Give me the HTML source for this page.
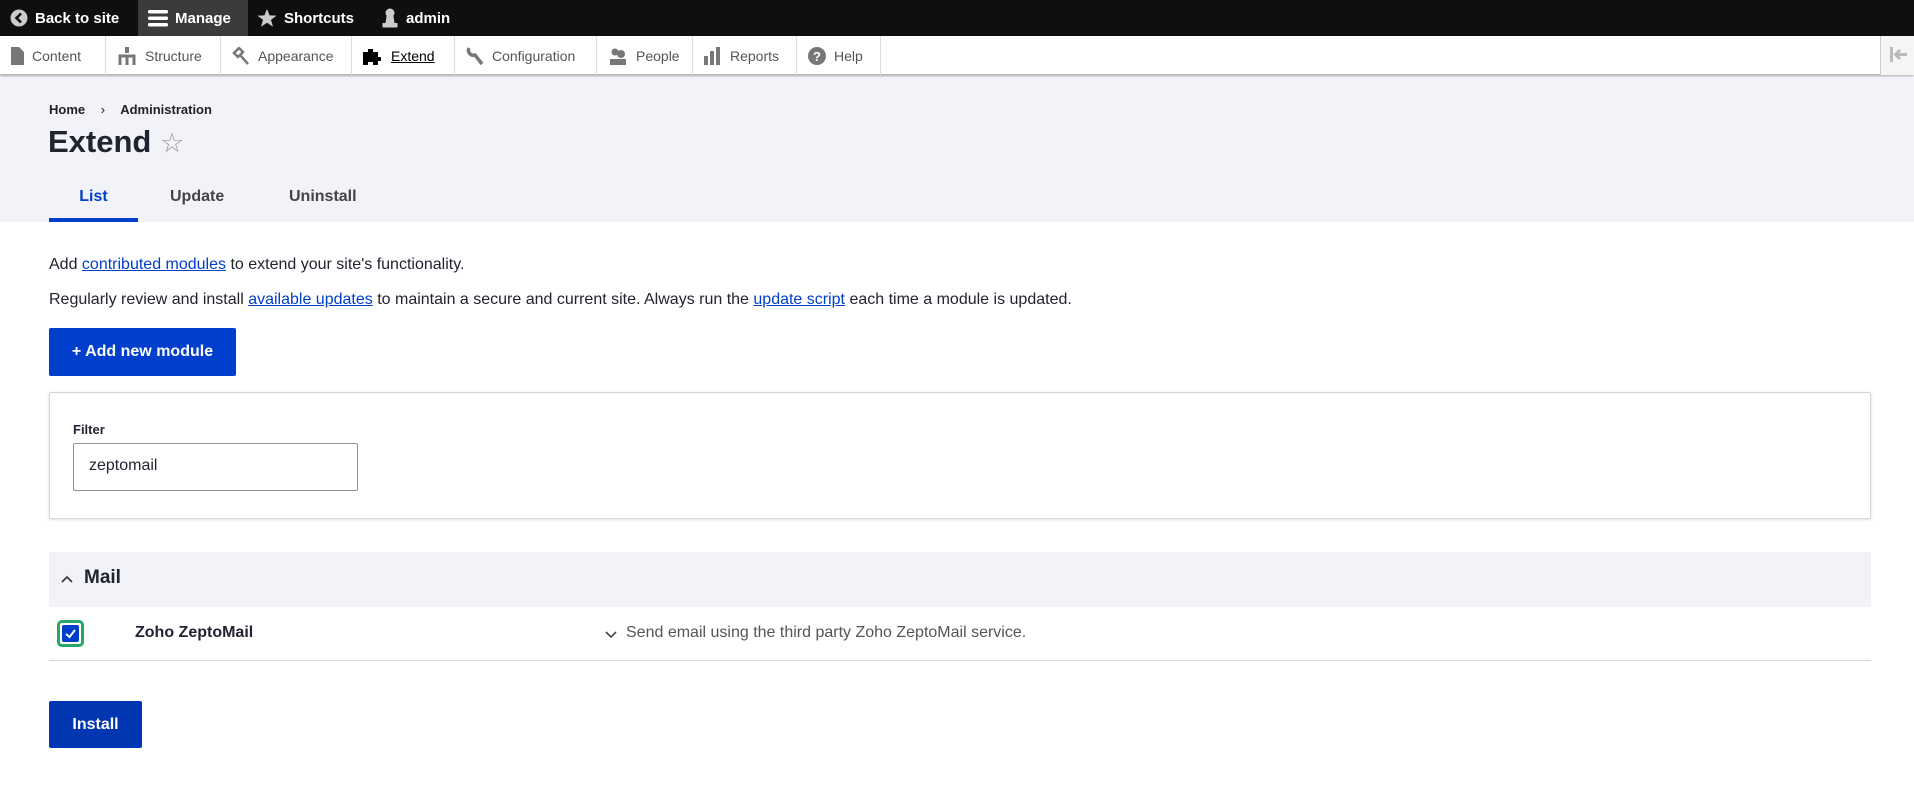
<!DOCTYPE html>
<html><head><meta charset="utf-8"><style>
*{box-sizing:border-box;margin:0;padding:0}
body{width:1914px;height:802px;overflow:hidden;background:#fff;font-family:"Liberation Sans",sans-serif;color:#222330;position:relative}
.top{position:absolute;left:0;top:0;width:1914px;height:36px;background:#0f0f0f;color:#fff;font-weight:bold;font-size:15px}
.top .it{position:absolute;top:0;height:36px;display:flex;align-items:center;gap:7px}
.nav{position:absolute;left:0;top:36px;width:1914px;height:39px;background:#fff;border-bottom:1px solid #bbb;box-shadow:0 2px 2px rgba(0,0,0,.25);font-size:14px;color:#555}
.nav .it{position:absolute;top:0;height:39px;display:flex;align-items:center;gap:8px;padding-left:11px;border-right:1px solid #ddd}
.hdr{position:absolute;left:0;top:77px;width:1914px;height:145px;background:#f2f3f8}
a{color:#003ecc}
.btn{position:absolute;background:#003ecc;color:#fff;font-weight:bold;font-size:16px;display:flex;align-items:center;justify-content:center;border-radius:2px}
</style></head><body>
<div class="top">
 <div class="it" style="left:10px"><svg width="18" height="18"><circle cx="9" cy="9" r="8.5" fill="#ccc"/><path d="M11 4.5 L6.5 9 L11 13.5" stroke="#111" stroke-width="2.6" fill="none"/></svg>Back to site</div>
 <div class="it" style="left:138px;width:110px;background:#3b3b3b;padding-left:10px"><svg width="20" height="18"><rect y="1" width="20" height="3.5" rx="1.5" fill="#fff"/><rect y="7.5" width="20" height="3.5" rx="1.5" fill="#fff"/><rect y="14" width="20" height="3.5" rx="1.5" fill="#fff"/></svg>Manage</div>
 <div class="it" style="left:257px"><svg width="20" height="20"><path d="M10 1 L12.6 7.4 L19.5 7.6 L14 11.9 L16 18.8 L10 14.8 L4 18.8 L6 11.9 L0.5 7.6 L7.4 7.4Z" fill="#ccc"/></svg>Shortcuts</div>
 <div class="it" style="left:381px"><svg width="18" height="20"><circle cx="9" cy="5" r="4.5" fill="#ccc"/><path d="M5.5 8 h7 l1 7 h3 v4.5 h-15 v-4.5 h3z" fill="#ccc"/></svg>admin</div>
</div>
<div class="nav">
 <div class="it" style="left:0;width:106px"><svg width="13" height="18"><path d="M0 0h8l5 5v13H0z" fill="#777"/></svg>Content</div>
 <div class="it" style="left:106px;width:115px"><svg width="20" height="18"><rect x="8" y="0" width="4" height="6" fill="#777"/><path d="M3 18V9h14v9" stroke="#777" stroke-width="3" fill="none"/><rect x="8.5" y="8" width="3" height="10" fill="#777"/></svg>Structure</div>
 <div class="it" style="left:221px;width:131px"><svg width="18" height="18"><path d="M2 6 L7 1 L11 5 L6 10Z M8 8 L16 17" stroke="#777" stroke-width="2.5" fill="none"/></svg>Appearance</div>
 <div class="it" style="left:352px;width:103px;color:#000;text-decoration:underline"><svg width="20" height="18"><path d="M0 5h5v-3h5v3h5v5h3v4h-3v4h-5v-3h-5v3H0z" fill="#000"/></svg>Extend</div>
 <div class="it" style="left:455px;width:142px"><svg width="18" height="20"><path d="M3 2 A5 5 0 0 0 9 9 L16 18" stroke="#777" stroke-width="3.5" fill="none"/></svg>Configuration</div>
 <div class="it" style="left:597px;width:96px"><svg width="20" height="18"><circle cx="7" cy="5" r="3.5" fill="#777"/><circle cx="13" cy="7" r="4" fill="#777"/><path d="M2 18v-6h16v6z" fill="#777"/></svg>People</div>
 <div class="it" style="left:693px;width:104px"><svg width="18" height="18"><rect x="0" y="9" width="4" height="9" fill="#777"/><rect x="6" y="4" width="4" height="14" fill="#777"/><rect x="12" y="0" width="4" height="18" fill="#777"/></svg>Reports</div>
 <div class="it" style="left:797px;width:84px"><svg width="18" height="18"><circle cx="9" cy="9" r="9" fill="#777"/><text x="9" y="14" font-size="13" font-weight="bold" fill="#fff" text-anchor="middle" font-family="Liberation Sans">?</text></svg>Help</div>
 <div style="position:absolute;left:1880px;top:0;width:34px;height:39px;background:#f5f5f5;border-left:1px solid #ccc"><svg width="30" height="39"><rect x="9" y="11" width="3" height="15" fill="#bbb"/><path d="M15 18.5h11M19 14l-4.5 4.5 4.5 4.5" stroke="#bbb" stroke-width="3" fill="none"/></svg></div>
</div>
<div class="hdr">
 <div style="position:absolute;left:49px;top:25px;font-size:13px;font-weight:bold;color:#222">Home <span style="margin:0 12px;font-weight:normal">›</span> Administration</div>
 <div style="position:absolute;left:48px;top:47px;font-size:31px;font-weight:bold;color:#222330">Extend <span style="font-weight:normal;color:#999;font-size:27px">☆</span></div>
 <div style="position:absolute;left:49px;top:111px;width:89px;text-align:center;font-weight:bold;font-size:16px;color:#003ecc">List</div>
 <div style="position:absolute;left:49px;top:141px;width:89px;height:4px;background:#003ecc"></div>
 <div style="position:absolute;left:170px;top:111px;font-weight:bold;font-size:16px;color:#444">Update</div>
 <div style="position:absolute;left:289px;top:111px;font-weight:bold;font-size:16px;color:#444">Uninstall</div>
</div>
<div style="position:absolute;left:49px;top:256px;font-size:16px">Add <a href="#">contributed modules</a> to extend your site's functionality.</div>
<div style="position:absolute;left:49px;top:291px;font-size:16px">Regularly review and install <a href="#">available updates</a> to maintain a secure and current site. Always run the <a href="#">update script</a> each time a module is updated.</div>
<div class="btn" style="left:49px;top:328px;width:187px;height:48px">+ Add new module</div>
<div style="position:absolute;left:49px;top:392px;width:1822px;height:127px;border:1px solid #d4d4d8;box-shadow:0 1px 3px rgba(0,0,0,.12);border-radius:2px"></div>
<div style="position:absolute;left:73px;top:422px;font-size:13px;font-weight:bold">Filter</div>
<div style="position:absolute;left:73px;top:443px;width:285px;height:48px;border:1px solid #8e929c;border-radius:2px;font-size:16px;padding:13px 15px">zeptomail</div>
<div style="position:absolute;left:49px;top:552px;width:1822px;height:55px;background:#f2f3f8"></div>
<svg style="position:absolute;left:60px;top:573px" width="14" height="12"><path d="M2 9 L7 4 L12 9" stroke="#333" stroke-width="1.6" fill="none"/></svg>
<div style="position:absolute;left:84px;top:567px;font-size:19px;font-weight:bold">Mail</div>
<div style="position:absolute;left:57px;top:620px;width:27px;height:27px;border:3px solid #26a769;border-radius:5px;padding:2px"><div style="width:17px;height:17px;background:#003ecc;border-radius:2px"><svg width="17" height="17"><path d="M4 9 L7.5 12 L13 5" stroke="#fff" stroke-width="2" fill="none"/></svg></div></div>
<div style="position:absolute;left:135px;top:624px;font-size:16px;font-weight:bold">Zoho ZeptoMail</div>
<svg style="position:absolute;left:604px;top:629px" width="14" height="12"><path d="M2 3 L7 8 L12 3" stroke="#444" stroke-width="1.6" fill="none"/></svg>
<div style="position:absolute;left:626px;top:624px;font-size:16px;color:#555">Send email using the third party Zoho ZeptoMail service.</div>
<div style="position:absolute;left:49px;top:660px;width:1822px;height:1px;background:#d4d4d8"></div>
<div class="btn" style="left:49px;top:701px;width:93px;height:47px;background:#0036b1">Install</div>
</body></html>
